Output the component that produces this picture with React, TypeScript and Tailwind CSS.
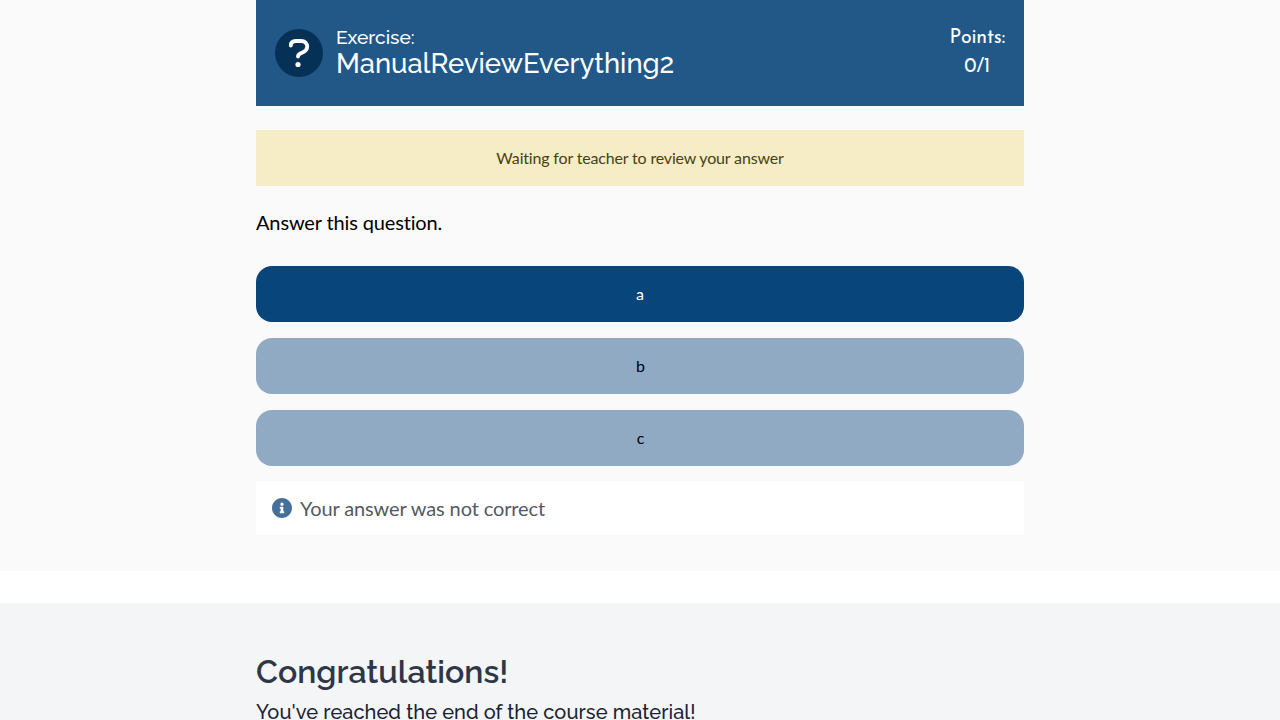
export default function App() {
  return (
    <div className="h-[720px] overflow-hidden bg-white font-['Lato',sans-serif] text-black [font-variant-ligatures:no-common-ligatures]">
      <section className="h-[571px] bg-[#fafafa]">
        <div className="mx-auto w-[768px]">
          <header className="flex h-[106px] items-center bg-[#215887] px-[19px] text-white">
            <svg viewBox="0 0 48 48" className="size-12 shrink-0" aria-hidden="true">
              <circle cx="24" cy="24" r="24" fill="#063157" />
              <path d="M15.8 16.6C15.8 13.5 18 12 21 12H26C30 12 32.2 14.5 32.2 17.7C32.2 20.7 30.5 22 28 23.3L25.3 24.5C23.7 25.3 23 26 23 27.5" fill="none" stroke="white" strokeWidth="3.8" strokeLinecap="round" />
              <circle cx="23" cy="35.5" r="2.6" fill="white" />
            </svg>
            <h1 className="mb-[4px] ml-[13px] flex-1 font-['Raleway','Lato',sans-serif]">
              <span className="block text-[19.2px] leading-[23px] font-medium">Exercise:</span>
              <span className="block text-[27.35px] leading-[28px] font-medium">ManualReviewEverything2</span>
            </h1>
            <div className="mb-0.5 text-center font-['Josefin_Sans','Lato',sans-serif] text-[19.6px] leading-7 tracking-[-0.15px]">
              <div>Points:</div>
              <div className="mt-px">0/1</div>
            </div>
          </header>
          <div className="mt-6 flex h-14 items-center justify-center bg-[#f6edc7] text-base tracking-[-0.17px] text-[#493f13]">Waiting for teacher to review your answer</div>
          <p className="mt-5 text-[20px] leading-8 tracking-[-0.14px]">Answer this question.</p>
          <div className="mt-7 flex flex-col gap-4 text-base">
            <button className="h-14 rounded-2xl bg-[#08457a] text-white">a</button>
            <button className="h-14 rounded-2xl bg-[#90aac4] pl-px">b</button>
            <button className="h-14 rounded-2xl bg-[#90aac4] pl-px">c</button>
          </div>
          <div className="mt-[15px] flex h-[54px] items-center gap-2 bg-white px-4 text-[20px] tracking-[-0.12px] text-[#535a66]">
            <svg viewBox="8 8 496 496" className="size-5" fill="#44719b"><path d="M256 8C119 8 8 119 8 256s111 248 248 248 248-111 248-248S393 8 256 8zm0 110a42 42 0 1 1 0 84 42 42 0 0 1 0-84zm56 254c0 7-5 12-12 12h-88c-7 0-12-5-12-12v-24c0-7 5-12 12-12h12v-64h-12c-7 0-12-5-12-12v-24c0-7 5-12 12-12h64c7 0 12 5 12 12v100h12c7 0 12 5 12 12z" /></svg>
            <span>Your answer was not correct</span>
          </div>
        </div>
      </section>
      <section className="mt-8 h-[117px] bg-[#f4f5f7] pt-[49px] font-['Raleway','Lato',sans-serif]">
        <div className="mx-auto w-[768px]">
          <h2 className="text-[32px] leading-10 font-semibold tracking-[0.05px] text-[#2d3747]">Congratulations!</h2>
          <p className="text-[20px] leading-10 font-medium tracking-[0.075px] text-[#1a2333]">You've reached the end of the course material!</p>
        </div>
      </section>
    </div>
  );
}
